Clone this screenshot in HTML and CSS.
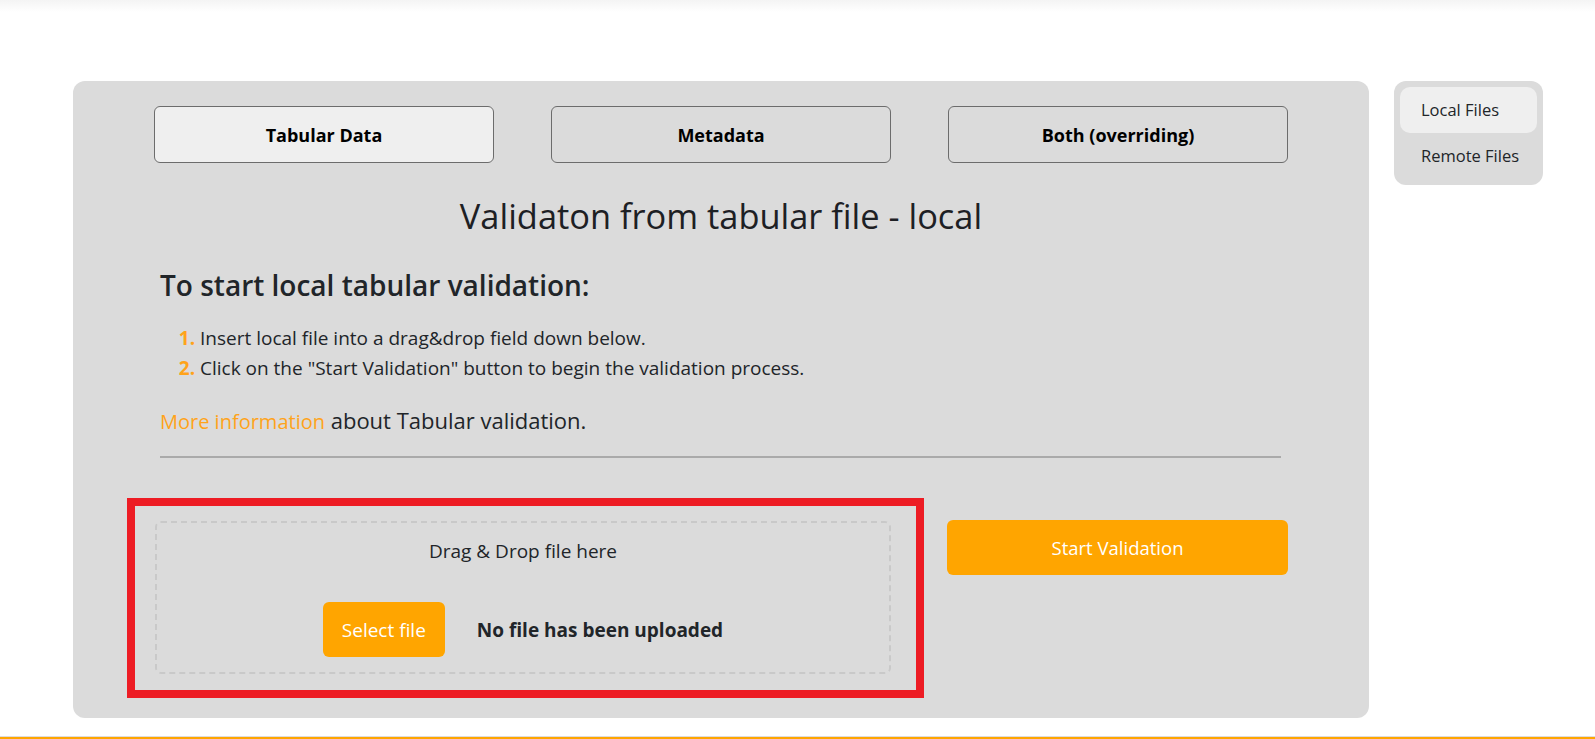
FILE: index.html
```html
<!DOCTYPE html>
<html lang="en">
<head>
<meta charset="utf-8">
<title>Validation</title>
<link rel="stylesheet" href="styles.css">
</head>
<body>
<div class="topbar"></div>
<div class="page">
  <main class="panel">
    <div class="tabs">
      <button class="tab active">Tabular Data</button>
      <button class="tab">Metadata</button>
      <button class="tab">Both (overriding)</button>
    </div>
    <h2 class="title">Validaton from tabular file - local</h2>
    <section class="info">
      <h3 class="subtitle">To start local tabular validation:</h3>
      <ol class="steps">
        <li>Insert local file into a drag&amp;drop field down below.</li>
        <li>Click on the "Start Validation" button to begin the validation process.</li>
      </ol>
      <p class="more"><a class="link">More information</a> about Tabular validation.</p>
      <hr class="rule">
    </section>
    <div class="actions">
      <div class="drop-wrap">
        <div class="drop">
          <p class="drop-text">Drag &amp; Drop file here</p>
          <div class="upload-row">
            <button class="btn select">Select file</button>
            <span class="status">No file has been uploaded</span>
          </div>
        </div>
        <div class="highlight"></div>
      </div>
      <button class="btn start">Start Validation</button>
    </div>
  </main>
  <nav class="side">
    <div class="side-item active">Local Files</div>
    <div class="side-item">Remote Files</div>
  </nav>
</div>
<footer class="footer"></footer>
</body>
</html>
```
FILE: styles.css
```css
* { box-sizing: border-box; }
html, body { margin: 0; padding: 0; }
body {
  height: 739px;
  display: flex;
  flex-direction: column;
  background: #fff;
  color: #212529;
  font-family: "Open Sans", "Noto Sans", sans-serif;
  overflow: hidden;
}
.topbar {
  height: 12px;
  background: linear-gradient(#f4f4f4, #ffffff);
}
.page {
  display: flex;
  align-items: flex-start;
  margin-top: 69px;
  margin-left: 73px;
}
.panel {
  width: 1296px;
  height: 637px;
  background: #dbdbdb;
  border-radius: 12px;
  padding: 25px 81px 0 81px;
}
.tabs {
  display: flex;
  justify-content: space-between;
}
.tab {
  width: 340px;
  height: 57px;
  border: 1px solid #6c6c6c;
  border-radius: 6px;
  background: transparent;
  font-family: inherit;
  font-weight: 700;
  font-size: 18px;
  color: #000;
}
.tab.active { background: #efefef; }
.title {
  margin: 34px 0 0;
  text-align: center;
  font-size: 34.4px;
  font-weight: 500;
  line-height: 38px;
  color: #1d2024;
}
.info { padding: 0 7px 0 6px; }
.subtitle {
  margin: 33px 0 0;
  font-size: 28px;
  font-weight: 600;
  line-height: 34px;
}
.steps {
  margin: 21px 0 0;
  padding-left: 40px;
  font-size: 19px;
  line-height: 30px;
}
.steps li::marker {
  color: #ffa31a;
  font-weight: 700;
}
.more {
  margin: 22px 0 0;
  height: 30px;
  font-size: 22px;
  line-height: 30px;
}
.link {
  color: #ffa31a;
  font-size: 20px;
}
.rule {
  margin: 21px 0 0;
  border: 0;
  height: 2px;
  background: #aaaaaa;
}
.actions {
  display: flex;
  justify-content: space-between;
  align-items: flex-start;
  margin-top: 63px;
}
.drop-wrap {
  position: relative;
  width: 737px;
  padding-left: 1px;
}
.drop {
  height: 153px;
  border: 2px dashed #c9c9c9;
  border-radius: 6px;
  padding-top: 13px;
  text-align: center;
}
.drop-text {
  margin: 0;
  font-size: 19px;
  line-height: 30px;
}
.upload-row {
  display: flex;
  justify-content: center;
  align-items: center;
  gap: 32px;
  margin-top: 36px;
}
.btn {
  border: 0;
  border-radius: 6px;
  background: #ffa500;
  color: #fff;
  font-family: inherit;
}
.select {
  width: 122px;
  height: 55px;
  font-size: 19px;
}
.status {
  font-size: 19px;
  font-weight: 700;
}
.highlight {
  position: absolute;
  left: -27px;
  top: -23px;
  right: -33px;
  bottom: -24px;
  border: 8px solid #ed1c24;
  pointer-events: none;
}
.start {
  width: 341px;
  height: 55px;
  margin-top: -1px;
  font-size: 18.5px;
}
.side {
  width: 149px;
  margin-left: 25px;
  padding: 6px;
  background: #dbdbdb;
  border-radius: 12px;
}
.side-item {
  height: 46px;
  line-height: 46px;
  padding-left: 21px;
  font-size: 16.5px;
  border-radius: 10px;
}
.side-item.active { background: #efefef; }
.footer {
  margin-top: auto;
  height: 3px;
  border-top: 1px solid #dddddd;
  background: #ffa500;
}
```
